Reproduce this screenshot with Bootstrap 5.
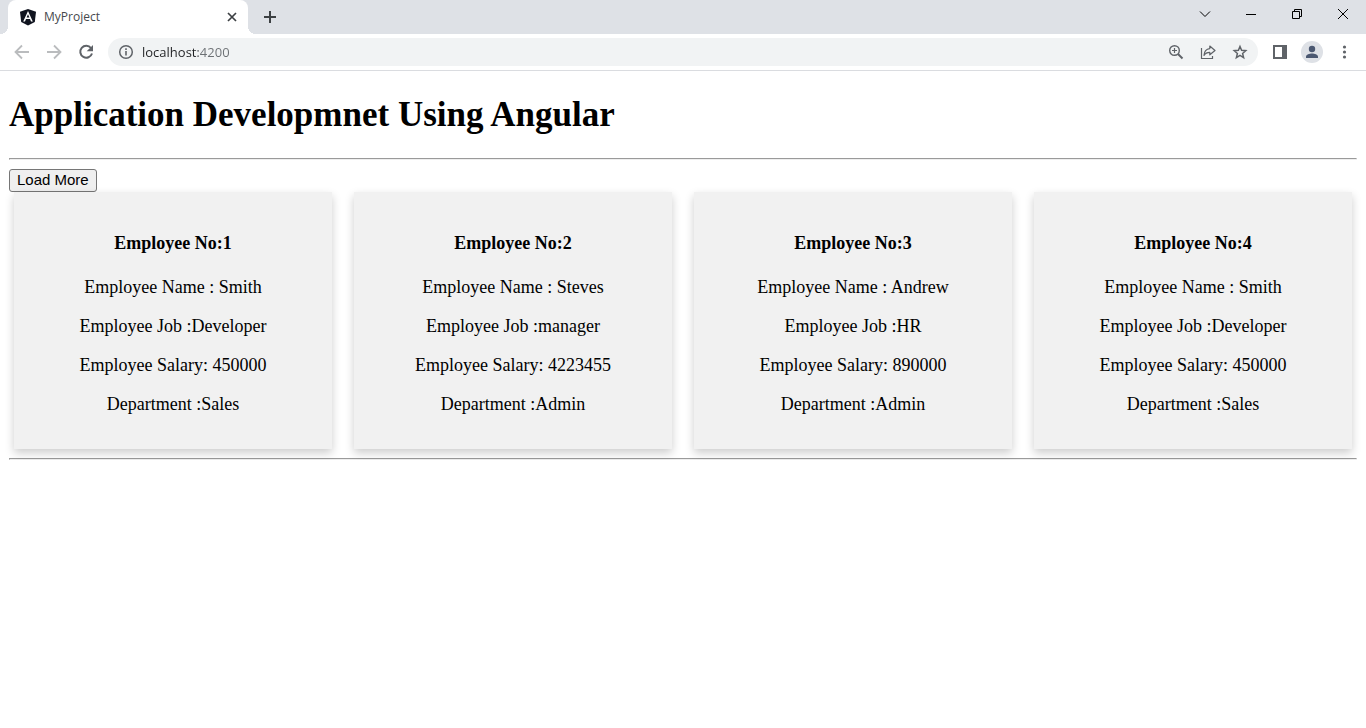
<!DOCTYPE html>
<html lang="en">
<head>
<meta charset="utf-8">
<meta name="viewport" content="width=device-width, initial-scale=1">
<title>MyProject</title>
<link href="https://cdn.jsdelivr.net/npm/bootstrap@5.3.0/dist/css/bootstrap.min.css" rel="stylesheet">
<script src="https://cdn.jsdelivr.net/npm/bootstrap@5.3.0/dist/js/bootstrap.bundle.min.js" defer></script>
<style>
  body { font-family: "Liberation Serif", serif; font-size: 18px; line-height: 21px; color: #000; background: #fff; }
  svg { display: block; flex: none; }
  .tool { border: 0; padding: 0; background: none; display: flex; align-items: center; justify-content: center; flex: none; color: #5f6368; }

  /* Tab strip */
  .tab-strip { background: #dee1e6; height: 34px; padding-left: 8px; }
  .browser-tab { position: relative; width: 240px; height: 34px; background: #fff; border-radius: 8px 8px 0 0; padding: 0 8px 0 12px; }
  .browser-tab::before, .browser-tab::after { content: ""; position: absolute; bottom: 0; width: 8px; height: 8px; }
  .browser-tab::before { left: -8px; background: radial-gradient(circle at 0 0, transparent 8px, #fff 8px); }
  .browser-tab::after { right: -8px; background: radial-gradient(circle at 100% 0, transparent 8px, #fff 8px); }
  .tab-title { font: 12px/16px "Open Sans", sans-serif; color: #45484c; text-decoration: none; }
  .tab-close { width: 16px; height: 16px; }
  .new-tab { width: 28px; height: 34px; color: #3c4043; margin-left: 8px; }
  .window-button { width: 46px; height: 28px; color: #000; }

  /* Toolbar */
  .toolbar { height: 37px; border-bottom: 1px solid #dadce0; padding: 0 6px; }
  .toolbar .tool { width: 32px; height: 28px; }
  .toolbar .dim { color: #babcbe; }
  .address { background: #f1f3f4; border-radius: 14px; height: 28px; padding: 0 2px 0 10px; margin: 0 6px; }
  .address-input { border: 0; outline: 0; padding: 0; height: 20px; min-width: 0; font: 13px/20px "Open Sans", sans-serif; color: #5f6368;
    background: linear-gradient(90deg, #202124 56px, #6b6f73 56px); -webkit-background-clip: text; background-clip: text; -webkit-text-fill-color: transparent; }

  /* Page */
  .page { padding: 0 9px; }
  .page-title { font-size: 35px; line-height: 40px; font-weight: 700; margin: 24px 0 23px; }
  .rule { margin: 0; height: 2px; border: 1px solid; border-color: #9a9a9a #eee #eee #9a9a9a; opacity: 1; }
  .load-button { display: block; height: 23px; margin-top: 9px; padding: 0 7px 2px; border: 1px solid #767676; border-radius: 3px; background: #efefef; color: #000; font: 15px/19px "Liberation Sans", sans-serif; }
  .load-button:hover { background: #e5e5e5; }
  .employees { --bs-gutter-x: 22px; margin: 0 -6px 9px; }
  .employee { border: 0; border-radius: 0; background: #f1f1f1; color: #000; padding: 18px 18px 16px; text-align: center; box-shadow: 0 4px 9px 0 rgba(0,0,0,.2); }
  .employee h3 { font-size: 18px; line-height: 21px; font-weight: 700; margin: 23px 0; }
  .employee p { margin: 0 0 18px; }
</style>
</head>
<body>
<header>
  <div class="tab-strip d-flex align-items-end">
    <div class="browser-tab d-flex align-items-center gap-2">
      <svg width="16" height="18" viewBox="0 0 16 18"><path fill="#10141f" d="M8 1l8 2.700-1.200 10.300L8 17.500 1.200 14 0 3.700z"/><path fill="#fff" fill-rule="evenodd" d="M8 3L3.200 13.500H5l1-2.400h4l1 2.400h1.800zM8 6.300l1.400 3.300H6.600z"/></svg>
      <a class="tab-title flex-grow-1" href="#">MyProject</a>
      <button class="tool tab-close" aria-label="Close tab"><svg width="16" height="16" viewBox="0 0 16 16" stroke="#3c4043" stroke-width="1.700"><path d="M4 4l8 8M12 4l-8 8"/></svg></button>
    </div>
    <button class="tool new-tab" aria-label="New tab"><svg width="14" height="14" viewBox="0 0 14 14" stroke="currentColor" stroke-width="2"><path d="M7 1v12M1 7h12"/></svg></button>
    <div class="d-flex ms-auto align-self-start">
      <button class="tool window-button" aria-label="Search tabs"><svg width="12" height="12" viewBox="0 0 12 12" fill="none" stroke="currentColor"><path d="M1 3.500l5 5 5-5"/></svg></button>
      <button class="tool window-button" aria-label="Minimize"><svg width="12" height="12" viewBox="0 0 12 12" stroke="currentColor"><path d="M1 6.500h10"/></svg></button>
      <button class="tool window-button" aria-label="Restore"><svg width="12" height="12" viewBox="0 0 12 12" fill="none" stroke="currentColor"><path d="M1.500 3.500h7v7h-7zM3.500 3V1.500h7v7H9"/></svg></button>
      <button class="tool window-button" aria-label="Close window"><svg width="12" height="12" viewBox="0 0 12 12" stroke="currentColor"><path d="M1 1l10 10M11 1L1 11"/></svg></button>
    </div>
  </div>
  <div class="toolbar d-flex align-items-center">
    <button class="tool dim" aria-label="Back"><svg width="16" height="16" viewBox="0 0 16 16" fill="none" stroke="currentColor" stroke-width="1.800"><path d="M15 8H2M8 1.500L1.500 8 8 14.500"/></svg></button>
    <button class="tool dim" aria-label="Forward"><svg width="16" height="16" viewBox="0 0 16 16" fill="none" stroke="currentColor" stroke-width="1.800"><path d="M1 8h13M8 1.500L14.500 8 8 14.500"/></svg></button>
    <button class="tool" aria-label="Reload"><svg width="16" height="16" viewBox="0 0 16 16"><path fill="none" stroke="currentColor" stroke-width="2" d="M13 4A6 6 0 1 0 14 9.500"/><path fill="currentColor" d="M15 1v6.300H8.700z"/></svg></button>
    <div class="address d-flex align-items-center flex-grow-1">
      <svg class="me-2" width="16" height="16" viewBox="0 0 16 16"><circle cx="8" cy="8" r="6.300" fill="none" stroke="#5f6368" stroke-width="1.500"/><path d="M8 7v4.500M8 4.200v1.700" stroke="#5f6368" stroke-width="1.600"/></svg>
      <input class="address-input flex-grow-1" type="text" aria-label="Address" value="localhost:4200">
      <button class="tool" aria-label="Zoom"><svg width="16" height="16" viewBox="0 0 16 16" fill="none" stroke="currentColor" stroke-width="1.400"><circle cx="6.500" cy="6.500" r="4.800"/><path d="M10 10l4.500 4.500" stroke-width="1.900"/><path d="M4 6.500h5M6.500 4v5" stroke-width="1.200"/></svg></button>
      <button class="tool" aria-label="Share"><svg width="16" height="16" viewBox="0 0 16 16" fill="none" stroke="currentColor" stroke-width="1.200"><path d="M1.500 4v10.500h11V12"/><path stroke-linejoin="round" d="M9.800 2l5.200 4.500-5.200 4.300V8.300C7 8.300 5.200 9.300 4 11.400 4.200 7.800 6 5 9.800 4.600z"/></svg></button>
      <button class="tool" aria-label="Bookmark"><svg width="16" height="16" viewBox="0 0 16 16" fill="none" stroke="currentColor" stroke-width="1.500"><path d="M8 2.500l1.600 3.800 4.200.4-3.200 2.800 1 4.100L8 11.400l-3.600 2.200 1-4.100-3.200-2.800 4.200-.4z"/></svg></button>
    </div>
    <button class="tool" aria-label="Side panel"><svg width="14" height="14" viewBox="0 0 14 14"><path fill="currentColor" fill-rule="evenodd" d="M0 0h14v14H0zM2 2v10h7V2z"/></svg></button>
    <button class="tool" aria-label="Profile"><svg width="22" height="22" viewBox="0 0 22 22"><circle cx="11" cy="11" r="11" fill="#dee1e6"/><circle cx="11" cy="8" r="3.200" fill="#4b5871"/><path fill="#4b5871" d="M5 17v-1.300c0-2.200 3.500-3.200 6-3.200s6 1 6 3.200V17z"/></svg></button>
    <button class="tool" aria-label="Menu"><svg width="16" height="16" viewBox="0 0 16 16" fill="currentColor"><circle cx="8.500" cy="3" r="1.600"/><circle cx="8.500" cy="8" r="1.600"/><circle cx="8.500" cy="13" r="1.600"/></svg></button>
  </div>
</header>
<main class="page">
  <h1 class="page-title">Application Developmnet Using Angular</h1>
  <hr class="rule">
  <button class="load-button" type="button">Load More</button>
  <div class="row employees">
    <div class="col-3"><div class="card employee">
      <h3>Employee No:1</h3>
      <p>Employee Name : Smith</p>
      <p>Employee Job :Developer</p>
      <p>Employee Salary: 450000</p>
      <p>Department :Sales</p>
    </div></div>
    <div class="col-3"><div class="card employee">
      <h3>Employee No:2</h3>
      <p>Employee Name : Steves</p>
      <p>Employee Job :manager</p>
      <p>Employee Salary: 4223455</p>
      <p>Department :Admin</p>
    </div></div>
    <div class="col-3"><div class="card employee">
      <h3>Employee No:3</h3>
      <p>Employee Name : Andrew</p>
      <p>Employee Job :HR</p>
      <p>Employee Salary: 890000</p>
      <p>Department :Admin</p>
    </div></div>
    <div class="col-3"><div class="card employee">
      <h3>Employee No:4</h3>
      <p>Employee Name : Smith</p>
      <p>Employee Job :Developer</p>
      <p>Employee Salary: 450000</p>
      <p>Department :Sales</p>
    </div></div>
  </div>
  <hr class="rule">
</main>
</body>
</html>
